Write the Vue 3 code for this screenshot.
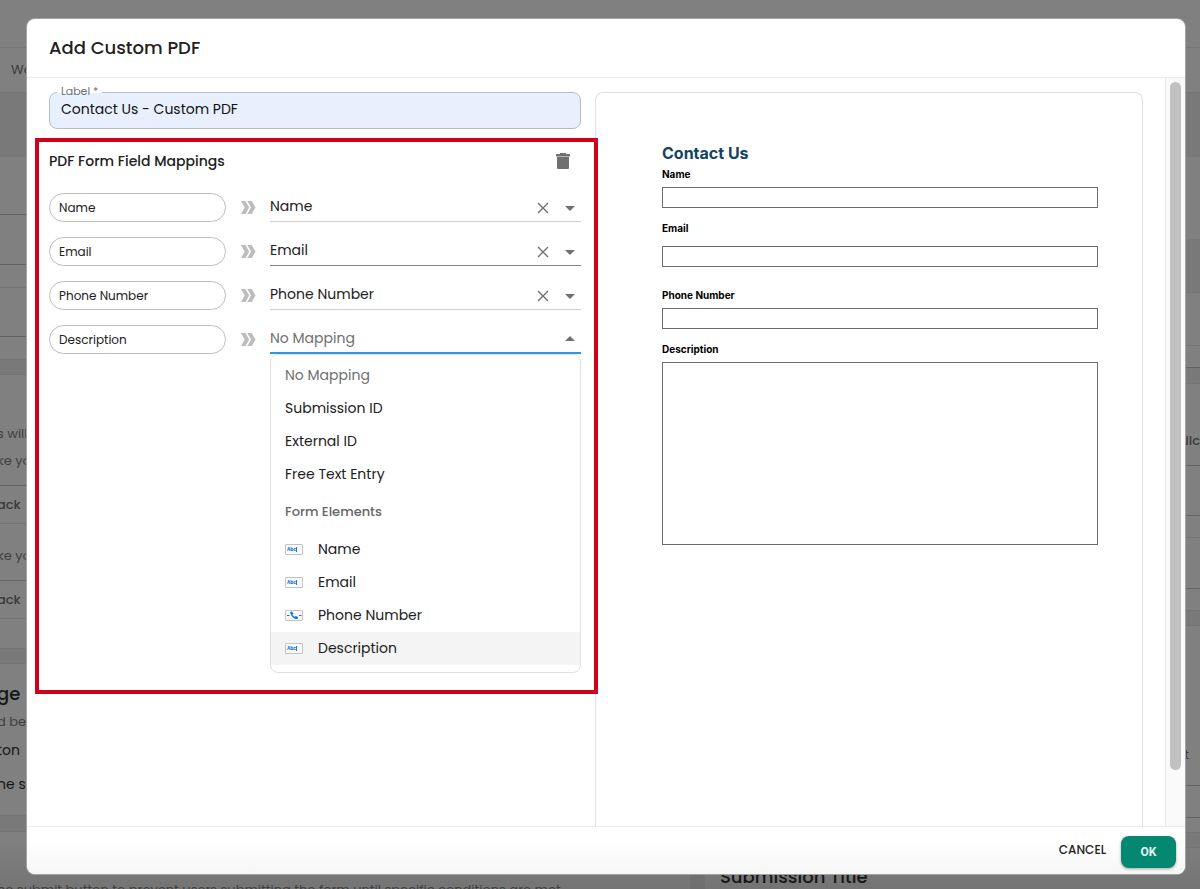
<script setup>
import {ref} from "vue";

const label = ref("Contact Us - Custom PDF")

const mappings = ref([
  {field: "Name", value: "Name"},
  {field: "Email", value: "Email", hover: true},
  {field: "Phone Number", value: "Phone Number"},
  {field: "Description", value: "", open: true},
])

const generalOptions = ["No Mapping", "Submission ID", "External ID", "Free Text Entry"]

const formElements = [
  {name: "Name", icon: "text"},
  {name: "Email", icon: "text"},
  {name: "Phone Number", icon: "phone"},
  {name: "Description", icon: "text"},
]

const active = ref("Description")

const pick = (name) => {
  const row = mappings.value.find((m) => m.open)
  if (row) row.value = name === "No Mapping" ? "" : name
}

// settings page that sits behind the dialog
const leftRows = [
  {h: 58, kind: "line dark"},
  {h: 50, kind: "line dark"},
  {h: 23, kind: "line"},
  {h: 49, kind: "line dark"},
  {h: 23, kind: "line"},
  {h: 15, kind: "band"},
  {h: 46},
  {h: 26, text: "s will", kind: "muted"},
  {h: 28, text: "ke you", kind: "muted"},
  {h: 11, kind: "line dark"},
  {h: 38, kind: "line bold", text: "ack"},
  {h: 18},
  {h: 28, text: "ke you", kind: "muted"},
  {h: 11, kind: "line dark"},
  {h: 38, kind: "line bold", text: "ack"},
  {h: 30, kind: "line"},
  {h: 15, kind: "band"},
  {h: 13},
  {h: 32, text: "ge", kind: "title"},
  {h: 26, text: "d be", kind: "muted"},
  {h: 30, text: "ton", kind: "strong"},
  {h: 38, text: "he sub", kind: "strong"},
  {h: 13, kind: "line"},
  {h: 16, kind: "band"},
  {h: 44},
  {h: 28, text: "he submit button to prevent users submitting the form until specific conditions are met.", kind: "muted"},
]

const rightRows = [
  {h: 82},
  {h: 54, kind: "band"},
  {h: 53, kind: "line"},
  {h: 22, kind: "line dark"},
  {h: 16, kind: "band"},
  {h: 43},
  {h: 28, text: "ailc", kind: "far bold"},
  {h: 11, kind: "line dark"},
  {h: 50, kind: "line dark"},
  {h: 22, kind: "line"},
  {h: 51, kind: "line dark"},
  {h: 22, kind: "line"},
  {h: 15, kind: "band"},
  {h: 115},
  {h: 28, text: "t", kind: "far inset"},
  {h: 17, kind: "line dark"},
  {h: 32, kind: "line dark"},
  {h: 15, kind: "line"},
  {h: 15, kind: "band"},
  {h: 13},
  {h: 30, text: "Submission Title", kind: "title indent"},
]
</script>

<template>
  <div class="backdrop" aria-hidden="true">
    <div class="topbar"></div>
    <div class="tabs">Wo</div>
    <div class="strip"></div>
    <div class="columns">
      <div class="column">
        <div v-for="(row, i) in leftRows" :key="i" class="row" :class="row.kind" :style="{height: row.h + 'px'}">{{ row.text }}</div>
      </div>
      <div class="gutter"></div>
      <div class="column">
        <div v-for="(row, i) in rightRows" :key="i" class="row" :class="row.kind" :style="{height: row.h + 'px'}">{{ row.text }}</div>
      </div>
    </div>
  </div>

  <div class="overlay">
    <div class="dialog" role="dialog" aria-labelledby="dialog-title">
      <header class="dialog_head">
        <h1 id="dialog-title">Add Custom PDF</h1>
      </header>

      <div class="dialog_body">
        <div class="content">
          <div class="form">
            <div class="label_field">
              <label for="pdf-label">Label *</label>
              <input id="pdf-label" v-model="label" type="text"/>
            </div>

            <section class="mappings">
              <div class="mappings_head">
                <h2>PDF Form Field Mappings</h2>
                <button type="button" class="icon_button" aria-label="Delete mappings">
                  <svg width="14" height="18" viewBox="0 0 14 18"><path fill="#707070" d="M4 1h6v1h4v2.500H0V2h4zM1 5h12V16q0 1-1 1H2q-1 0-1-1z"/></svg>
                </button>
              </div>

              <div class="mapping_list">
                <div v-for="(m, i) in mappings" :key="m.field" class="mapping">
                  <label class="pill" :for="'map-' + i">{{ m.field }}</label>
                  <svg class="arrows" width="15" height="13" viewBox="0 0 15 13"><path fill="#bdbdbd" d="M0 0h4.500l3.700 6.500-3.700 6.500H0l3.700-6.500zM6.300 0h4.500l3.700 6.500-3.700 6.500H6.300l3.700-6.500z"/></svg>
                  <div class="picker" :class="{hover: m.hover, open: m.open}">
                    <select :id="'map-' + i" v-model="m.value">
                      <option value="">No Mapping</option>
                      <option v-for="el in formElements" :key="el.name" :value="el.name">{{ el.name }}</option>
                    </select>
                    <button v-if="!m.open" type="button" class="icon_button" aria-label="Clear" @click="m.value = ''">
                      <svg width="12" height="12" viewBox="0 0 12 12"><path fill="none" stroke="#707070" stroke-width="1.400" d="M1 1l10 10M11 1L1 11"/></svg>
                    </button>
                    <svg class="caret" width="10" height="5" viewBox="0 0 10 5"><path fill="#707070" :d="m.open ? 'M0 5l5-5 5 5z' : 'M0 0l5 5 5-5z'"/></svg>
                  </div>
                </div>
              </div>

              <ul class="menu">
                <li v-for="name in generalOptions" :key="name">
                  <button type="button" class="option" :class="{none: name === 'No Mapping'}" @click="pick(name)">{{ name }}</button>
                </li>
                <li class="group">Form Elements</li>
                <li v-for="el in formElements" :key="el.name">
                  <button type="button" class="option" :class="{active: el.name === active}" @click="pick(el.name)" @mouseenter="active = el.name">
                    <svg v-if="el.icon === 'text'" class="el_icon" width="18" height="11" viewBox="0 0 18 11">
                      <rect x="0.500" y="0.500" width="17" height="10" rx="0.500" fill="#fafafa" stroke="#c4c4c4"/>
                      <text x="2" y="7.200" font-size="4.500" font-weight="700" fill="#1976d2">Abc</text>
                      <path d="M11.500 3v5" stroke="#1976d2"/>
                    </svg>
                    <svg v-else class="el_icon" width="18" height="11" viewBox="0 0 18 11">
                      <rect x="0.500" y="0.500" width="17" height="10" rx="0.500" fill="#fafafa" stroke="#c4c4c4"/>
                      <path d="M2 5.500h2.500M14 5.500h2.500" stroke="#1976d2" stroke-width="1.200"/>
                      <path fill="#1976d2" d="M5 2l2-.500 1.300 2-.800 1.200q.800 1.400 2.200 2l1.200-.700 2.100 1-.200 1.800q-1.400.600-3.300-.300Q6 6.700 5 2z"/>
                    </svg>
                    {{ el.name }}
                  </button>
                </li>
              </ul>
            </section>
          </div>

          <div class="preview">
            <h2>Contact Us</h2>
            <div class="field">
              <label for="pdf-name">Name</label>
              <input id="pdf-name" type="text"/>
            </div>
            <div class="field tall">
              <label for="pdf-email">Email</label>
              <input id="pdf-email" type="text"/>
            </div>
            <div class="field">
              <label for="pdf-phone">Phone Number</label>
              <input id="pdf-phone" type="text"/>
            </div>
            <div class="field">
              <label for="pdf-description">Description</label>
              <textarea id="pdf-description"></textarea>
            </div>
          </div>
        </div>
        <div class="scroll_track">
          <div class="scroll_thumb"></div>
        </div>
      </div>

      <footer class="dialog_foot">
        <button type="button" class="cancel">CANCEL</button>
        <button type="button" class="ok">OK</button>
      </footer>
    </div>
  </div>
</template>

<style>
body {
  margin: 0;
  background: #808080;
}
</style>

<style scoped>
* {
  box-sizing: border-box;
}

.backdrop,
.overlay {
  position: fixed;
  inset: 0;
  font-family: Poppins, Inter, sans-serif;
}

.backdrop {
  display: flex;
  flex-direction: column;
  overflow: hidden;
  background: linear-gradient(#808080 calc(100% - 50px), #747474);
  color: #3a3a3a;
  font-size: 13px;
}

.topbar {
  flex: 0 0 48px;
  border-bottom: 1px solid #767676;
}

.tabs {
  flex: 0 0 45px;
  padding-left: 11px;
  border-bottom: 1px solid #747474;
  line-height: 44px;
}

.strip {
  flex: 0 0 64px;
  background: #797979;
}

.columns {
  display: grid;
  grid-template-columns: 690fr 15px 495fr;
}

.column {
  min-width: 0;
}

.column:first-child {
  text-indent: -3px;
}

.gutter {
  background: rgba(0, 0, 0, 0.05);
  border-left: 1px solid #707070;
}

.row {
  display: flex;
  align-items: center;
  white-space: nowrap;
}

.line {
  border-bottom: 1px solid #747474;
}

.dark {
  border-color: #636363;
}

.band {
  background: #797979;
  border-bottom: 1px solid #747474;
}

.muted {
  color: #3f3f3f;
}

.bold {
  font-weight: 500;
}

.strong {
  color: #161616;
  font-size: 14px;
}

.title {
  color: #161616;
  font-size: 18px;
  font-weight: 500;
}

.far {
  justify-content: flex-end;
}

.inset {
  padding-right: 11px;
}

.indent {
  padding-left: 15px;
}

.overlay {
  display: flex;
  padding: 19px 15px 15px 27px;
}

.dialog {
  flex: 1;
  display: flex;
  flex-direction: column;
  min-width: 0;
  overflow: hidden;
  border-radius: 8px;
  background: #fff;
  box-shadow: 0 0 0 1px #a3a3a3;
  color: #212121;
}

.dialog_head {
  padding: 15px 22px;
  border-bottom: 1px solid #ebebeb;
}

h1,
h2 {
  margin: 0;
  font-weight: 500;
}

h1 {
  font-size: 18px;
  line-height: 28px;
}

.dialog_body {
  flex: 1;
  display: flex;
  min-height: 0;
  overflow: hidden;
}

.content {
  flex: 1;
  display: grid;
  grid-template-columns: 532fr 548fr;
  gap: 14px;
  min-width: 0;
  padding: 14px 22px 0;
}

button,
input,
select,
textarea {
  font-family: inherit;
}

.label_field {
  position: relative;
}

.label_field label {
  position: absolute;
  top: -8px;
  left: 8px;
  padding: 0 4px;
  background: linear-gradient(#fff 9px, #e8f0fe 9px);
  color: #707070;
  font-size: 11px;
  line-height: 14px;
}

.label_field input {
  display: block;
  width: 100%;
  height: 37px;
  padding: 0 11px 2px;
  border: 1px solid #b4bccd;
  border-radius: 8px;
  background: #e8f0fe;
  color: #111;
  font-size: 14px;
}

.mappings {
  position: relative;
  z-index: 1;
  margin: 9px -17px 0 -14px;
  padding: 0 13px 17px 10px;
  border: 4px solid #d0021b;
}

.mappings_head {
  display: flex;
  align-items: center;
  justify-content: space-between;
  height: 38px;
  padding-right: 11px;
}

.mappings_head h2 {
  font-size: 14px;
  line-height: 20px;
}

.icon_button {
  display: flex;
  padding: 0;
  border: 0;
  background: none;
  cursor: pointer;
}

.mapping_list {
  display: grid;
  gap: 15px;
  margin-top: 13px;
}

.mapping {
  display: grid;
  grid-template-columns: 177px 44px 1fr;
  align-items: center;
}

.pill {
  height: 29px;
  padding: 0 9px;
  border: 1px solid #bdbdbd;
  border-radius: 15px;
  font-size: 12px;
  line-height: 27px;
}

.arrows {
  justify-self: center;
}

.picker {
  display: flex;
  align-items: center;
  height: 29px;
  padding: 2px 6px 0 0;
  border-bottom: 1px solid #cfcfcf;
}

.picker.hover {
  border-color: #858585;
}

.picker.open {
  padding-top: 0;
  border-bottom: 2px solid #2f96e6;
}

.picker select {
  flex: 1;
  min-width: 0;
  height: 26px;
  padding: 0 0 4px;
  border: 0;
  appearance: none;
  background: none;
  color: #212121;
  font-size: 14px;
}

.picker.open select {
  padding-bottom: 2px;
  color: #707070;
}

.caret {
  margin-left: 16px;
  pointer-events: none;
}

.menu {
  margin: 0 0 0 221px;
  padding: 4px 0 7px;
  border: 1px solid #e0e0e0;
  border-radius: 8px;
  list-style: none;
}

.option {
  display: flex;
  align-items: center;
  width: 100%;
  height: 33px;
  padding: 0 14px;
  border: 0;
  background: none;
  color: #212121;
  font-size: 14px;
  text-align: left;
}

.option.none {
  color: #707070;
}

.option.active {
  background: #f4f4f4;
}

.group {
  padding: 0 14px;
  color: #666;
  font-size: 13px;
  font-weight: 500;
  line-height: 42px;
}

.el_icon {
  margin-right: 15px;
}

.preview {
  padding: 50px 44px 0 66px;
  border: 1px solid #e0e0e0;
  border-bottom: 0;
  border-radius: 8px 8px 0 0;
}

.preview h2 {
  margin-bottom: 4px;
  color: #124460;
  font-family: Inter, sans-serif;
  font-size: 16px;
  font-weight: 700;
  line-height: 20px;
}

.field {
  display: grid;
  gap: 6px;
  margin-bottom: 13px;
}

.field.tall {
  gap: 11px;
  margin-bottom: 21px;
}

.field label {
  color: #000;
  font-family: Inter, sans-serif;
  font-size: 10px;
  font-weight: 700;
  line-height: 14px;
}

.field input,
.field textarea {
  width: 100%;
  height: 21px;
  border: 1px solid #6b6b6b;
  background: #fff;
}

.field textarea {
  height: 183px;
  resize: none;
}

.scroll_track {
  flex: 0 0 20px;
  padding: 4px;
  border-left: 1px solid #e8e8e8;
  background: #fafafa;
}

.scroll_thumb {
  width: 11px;
  height: 93%;
  border-radius: 6px;
  background: #c1c1c1;
}

.dialog_foot {
  display: flex;
  align-items: center;
  justify-content: flex-end;
  gap: 15px;
  height: 48px;
  padding: 2px 9px 0;
  border-top: 1px solid #ebebeb;
  background: linear-gradient(#fff 30%, #f6f6f6);
}

.cancel {
  padding: 0 0 3px;
  border: 0;
  background: none;
  color: #212121;
  font-size: 12px;
  font-weight: 500;
}

.ok {
  width: 55px;
  height: 32px;
  border: 0;
  border-radius: 8px;
  background: #058872;
  box-shadow: 0 1px 3px rgba(0, 0, 0, 0.35);
  color: #e6f5f2;
  font-family: Roboto, sans-serif;
  font-size: 12px;
  font-weight: 700;
}
</style>
